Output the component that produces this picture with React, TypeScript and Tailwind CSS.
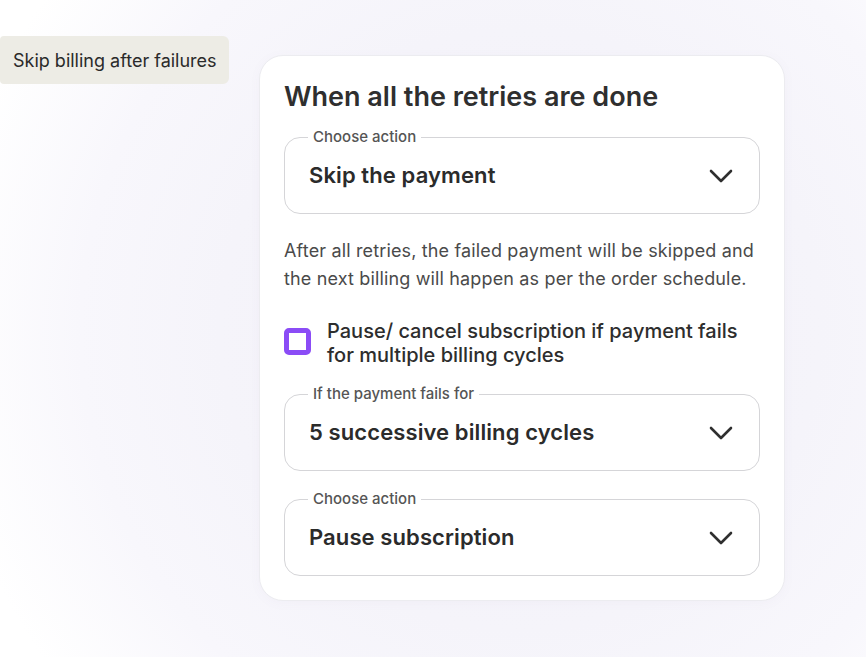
import React from "react";

function Chevron() {
  return (
    <svg width="24" height="14" viewBox="0 0 24 14" fill="none" className="shrink-0">
      <path d="M2 2L12 12L22 2" stroke="#2f2f2f" strokeWidth="2.6" strokeLinecap="round" strokeLinejoin="round" />
    </svg>
  );
}

function SelectBox({ label, value }: { label: string; value: string }) {
  return (
    <div className="relative h-[77px] rounded-[16px] border border-[#d5d5d8] bg-white flex items-center justify-between pl-[24px] pr-[26px]">
      <span className="absolute -top-[10px] left-[23px] px-[5px] bg-white text-[15px] leading-[18px] font-medium text-[#555555]">
        {label}
      </span>
      <span className="text-[22px] leading-[28px] font-semibold text-[#2b2b2b] tracking-[0.1px] -mt-[1px]">{value}</span>
      <Chevron />
    </div>
  );
}

export default function App() {
  return (
    <div
      className="w-[866px] h-[657px] overflow-hidden flex items-start bg-[radial-gradient(circle_at_520px_330px,#f2f0f8_0px,#f5f4fa_300px,#f8f7fc_440px,#ffffff_580px)]"
      style={{ fontFamily: "Inter, 'Noto Sans', sans-serif" }}
    >
      <div className="mt-[36px] w-[229px] h-[48px] rounded-r-[6px] rounded-l-[4px] bg-[#edece5] flex items-center pl-[13px] text-[18px] text-[#2a2a2a]">
        Skip billing after failures
      </div>
      <div className="ml-[30px] mt-[55px] w-[526px] rounded-[24px] bg-white border border-[#ececf0] shadow-[0_2px_12px_rgba(120,110,160,0.04)] px-[24px] pt-[25px] pb-[24px] flex flex-col">
        <h1 className="text-[27px] leading-[32px] font-semibold text-[#2f2f2f]">
          When all the retries are done
        </h1>
        <div className="mt-[24px]">
          <SelectBox label="Choose action" value="Skip the payment" />
        </div>
        <p className="mt-[23px] text-[18px] leading-[28px] text-[#4a4a4a] tracking-[0.15px]">
          After all retries, the failed payment will be skipped and the next billing will happen as per the order schedule.
        </p>
        <div className="mt-[26px] flex items-start gap-[16px]">
          <div className="mt-[9px] w-[27px] h-[27px] shrink-0 rounded-[5px] border-[5px] border-[#8b4cf6] bg-white" />
          <div className="text-[20px] leading-[24px] font-medium text-[#2d2d2d]">
            Pause/ cancel subscription if payment fails for multiple billing cycles
          </div>
        </div>
        <div className="mt-[27px]">
          <SelectBox label="If the payment fails for" value="5 successive billing cycles" />
        </div>
        <div className="mt-[28px]">
          <SelectBox label="Choose action" value="Pause subscription" />
        </div>
      </div>
    </div>
  );
}
